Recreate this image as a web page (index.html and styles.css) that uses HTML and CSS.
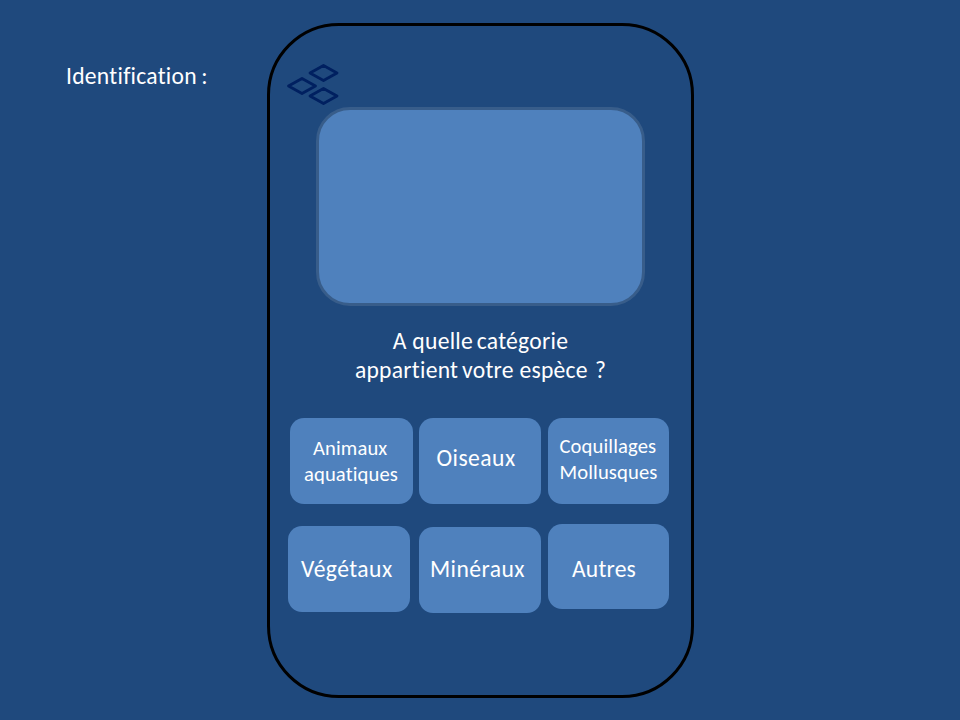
FILE: index.html
```html
<!DOCTYPE html>
<html lang="fr">
<head>
<meta charset="utf-8">
<title>Identification</title>
<link rel="stylesheet" href="styles.css">
</head>
<body>
<h1 class="title">Identification :</h1>
<main class="phone">
  <svg class="logo" viewBox="0 0 54 44" width="54" height="44">
    <path d="M24 10 37.500 2.500 51 10 37.500 17.500zM2.500 23 16 15.500 29.500 23 16 30.500zM24 33 37.500 25.500 51 33 37.500 40.500z"/>
  </svg>
  <div class="photo"></div>
  <p class="question">A quelle<span class="tight"> </span>catégorie<br>appartient<span class="tight"> </span>votre espèce<span class="loose"> </span>?</p>
  <div class="row">
    <button class="tile small animaux"><span class="indent">Animaux</span><span>aquatiques</span></button>
    <button class="tile oiseaux">Oiseaux</button>
    <button class="tile small coquillages"><span>Coquillages</span><span>Mollusques</span></button>
  </div>
  <div class="row second">
    <button class="tile vegetaux">Végétaux</button>
    <button class="tile mineraux">Minéraux</button>
    <button class="tile autres">Autres</button>
  </div>
</main>
</body>
</html>
```
FILE: styles.css
```css
* { box-sizing: border-box; }
body {
  margin: 0;
  height: 720px;
  display: flex;
  align-items: flex-start;
  overflow: hidden;
  background: #1f497d;
  color: #fff;
  font: 23.6px/29px Carlito, Lato, sans-serif;
  font-variant-ligatures: none;
  letter-spacing: 0.26px;
}
.title {
  width: 201px;
  margin: 62px 0 0 66px;
  font: inherit;
  font-variant-ligatures: none;
  white-space: nowrap;
  word-spacing: -1.3px;
}
.phone {
  width: 427px;
  height: 675px;
  margin-top: 23px;
  padding: 37px 0 0 16px;
  border: 3px solid #000;
  border-radius: 72px;
}
.logo { display: block; }
.logo path {
  fill: none;
  stroke: #002060;
  stroke-width: 2.8;
  stroke-linejoin: round;
}
.photo {
  width: 329px;
  height: 199px;
  margin: 0 0 0 30px;
  border: 3px solid #385d8a;
  border-radius: 34px;
  background: #4f81bd;
}
.question {
  width: 389px;
  margin: 21px 0 33px;
  text-align: center;
  white-space: nowrap;
}
.tight { word-spacing: -1.8px; }
.loose { word-spacing: 1.5px; }
.row { display: flex; height: 86px; padding-left: 4px; }
.second { margin-top: 20px; padding-left: 2px; }
.tile {
  display: flex;
  flex-direction: column;
  align-items: flex-start;
  justify-content: flex-start;
  flex: none;
  width: 122px;
  height: 86px;
  padding: 0;
  border: 0;
  border-radius: 14px;
  background: #4f81bd;
  color: inherit;
  font: inherit;
  font-variant-ligatures: none;
  letter-spacing: 0.45px;
  white-space: nowrap;
}
.small { font-size: 20.6px; line-height: 26px; letter-spacing: 0.12px; }
.animaux { width: 123px; margin-right: 6px; padding: 17px 0 0 14px; }
.oiseaux { margin-right: 7px; padding: 26px 0 0 17.500px; }
.coquillages { width: 121px; padding: 15px 0 0 11.500px; }
.vegetaux { margin: 2px 9px 0 0; padding: 29px 0 0 13px; }
.mineraux { margin: 3px 7px 0 0; padding: 28px 0 0 11px; }
.autres { width: 121px; height: 85px; padding: 31px 0 0 24px; letter-spacing: 0.2px; }
.indent { margin-left: 9px; }
```
